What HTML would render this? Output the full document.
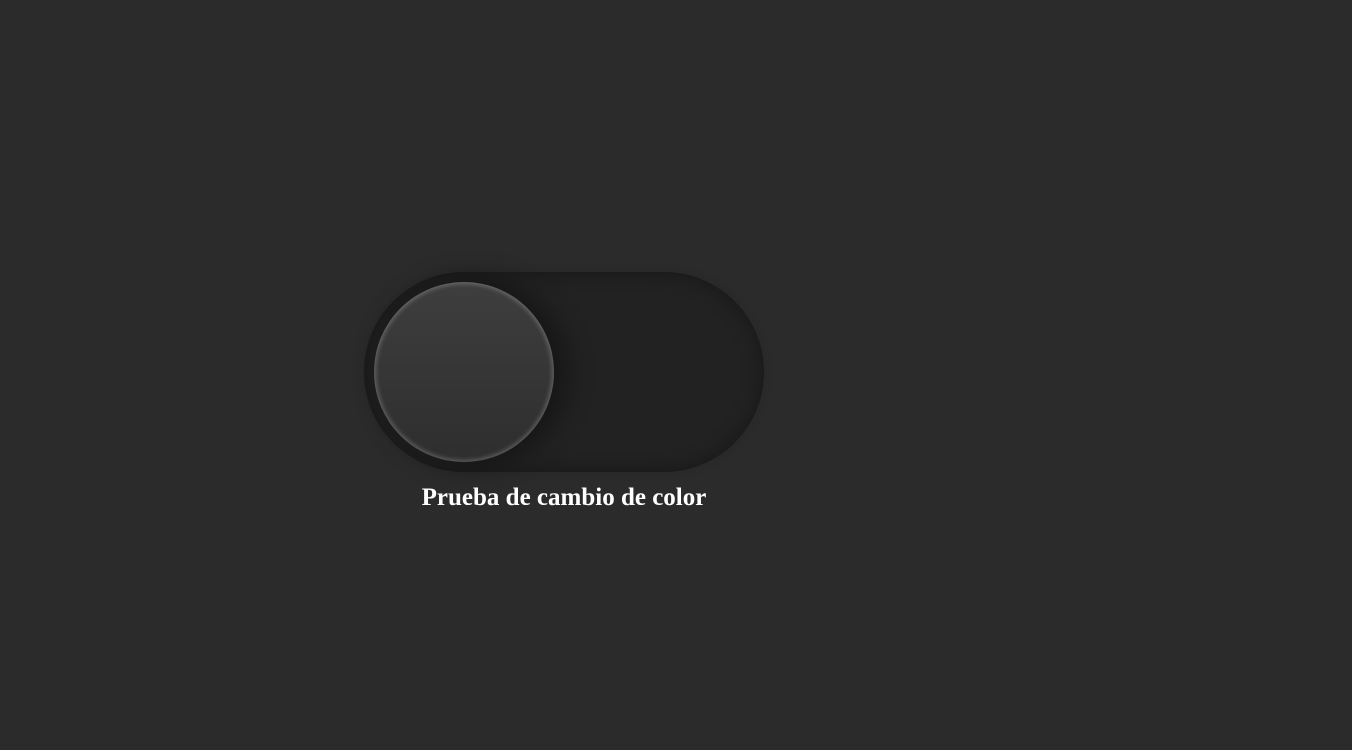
<!DOCTYPE html>
<html><head><style>
html,body{margin:0;padding:0;background:#2b2b2b;width:1352px;height:750px;overflow:hidden}
.track{position:absolute;left:364px;top:272px;width:400px;height:200px;border-radius:100px;background:#222;box-shadow:inset 0 0 20px rgba(0,0,0,.35),0 0 10px rgba(0,0,0,.1)}
.knob{position:absolute;left:374px;top:282px;width:180px;height:180px;border-radius:50%;background:linear-gradient(#3e3e3e,#2e2e2e);box-shadow:inset 0 0 4px 2px rgba(255,255,255,.22),10px 0 30px rgba(0,0,0,.45)}
.t{position:absolute;left:364px;width:400px;top:484px;text-align:center;font:bold 25px "Liberation Serif",serif;color:#fff}
</style></head><body>
<div class="track"></div><div class="knob"></div>
<div class="t">Prueba de cambio de color</div>
</body></html>
